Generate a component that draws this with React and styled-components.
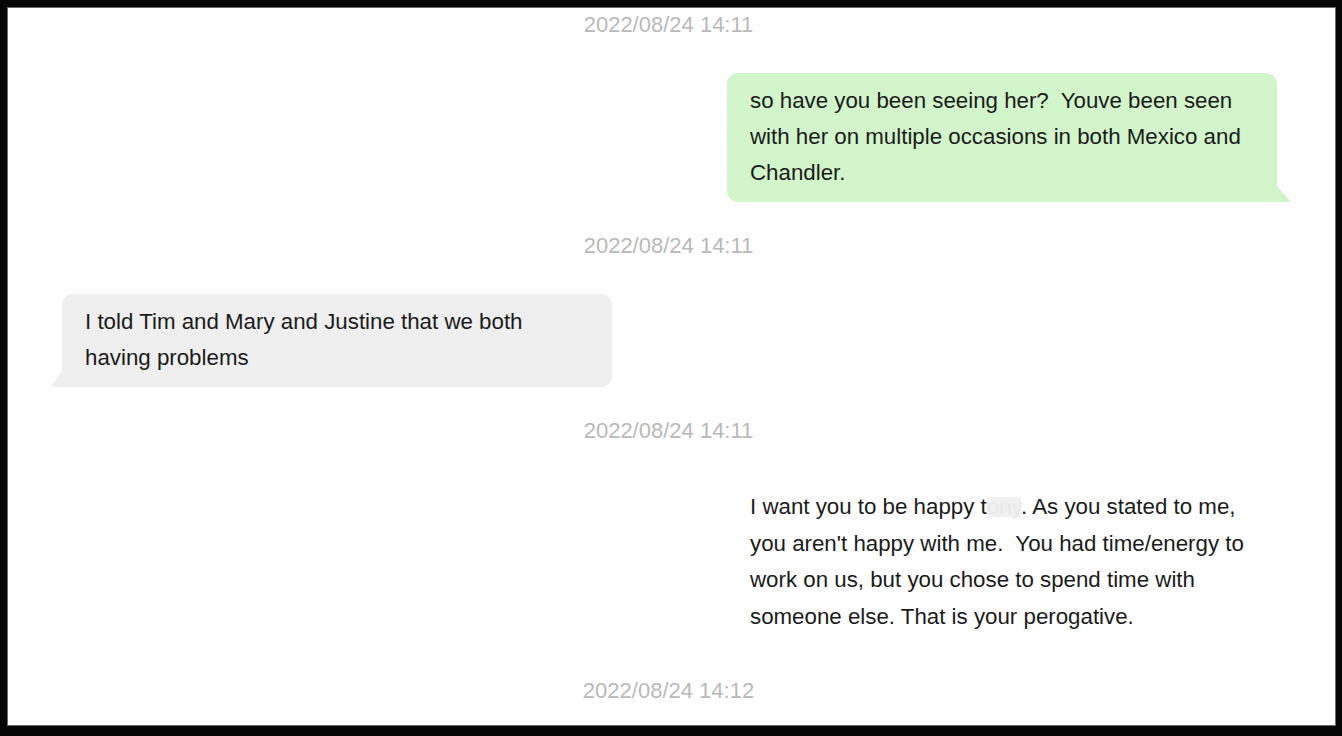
import React from "react";
import styled, {createGlobalStyle, css} from "styled-components";

const GlobalStyle = createGlobalStyle`
    html, body {
        margin: 0;
        padding: 0;
        background: #000;
    }
    body {
        font-family: "Liberation Sans", Arial, Helvetica, sans-serif;
    }
`

const Frame = styled.div`
    box-sizing: border-box;
    width: 1342px;
    height: 736px;
    border-style: solid;
    border-color: #050505;
    border-width: 7px 6px 10px 7px;
    background: #fff;
    box-shadow: inset 0 0 0 1px #6a6a6a;
    overflow: hidden;
`

const Thread = styled.div`
    display: flex;
    flex-direction: column;
    padding: 5px 59px 0 55px;
`

const Stamp = styled.div`
    align-self: center;
    font-size: 22px;
    line-height: 26px;
    color: #b9b9b9;
    margin: 0 0 35px -2px;
`

const Bubble = styled.div`
    position: relative;
    box-sizing: border-box;
    max-width: 550px;
    padding: 10px 23px 11px;
    margin-bottom: 31px;
    font-size: 22.3px;
    line-height: ${({lead}) => lead || 36}px;
    color: #1b1b1b;
    white-space: pre-wrap;
    border-radius: 11px;
    ${({side}) => side === 'right' ? css`
        align-self: flex-end;
        border-bottom-right-radius: 0;
    ` : css`
        align-self: flex-start;
        border-bottom-left-radius: 0;
    `}
    background: ${({tone}) => tone === 'green' ? '#d3f5cb' : tone === 'gray' ? '#efefef' : '#fff'};

    &::after {
        content: '';
        position: absolute;
        bottom: 0;
        width: 14px;
        height: 16px;
        background: inherit;
        ${({side}) => side === 'right' ? css`
            right: -14px;
            clip-path: polygon(0 0, 100% 100%, 0 100%);
        ` : css`
            left: -12px;
            width: 12px;
            clip-path: polygon(100% 0, 100% 100%, 0 100%);
        `}
    }
`

// blurred-out name: a light box drawn behind faded letters
const Redacted = styled.span`
    color: #e9e9e9;
    background: linear-gradient(#f1f1f1, #f1f1f1) no-repeat center / 100% 20px;
`

const messages = [
    {
        time: '2022/08/24 14:11',
        side: 'right',
        tone: 'green',
        text: 'so have you been seeing her?  Youve been seen with her on multiple occasions in both Mexico and Chandler.'
    },
    {
        time: '2022/08/24 14:11',
        side: 'left',
        tone: 'gray',
        text: 'I told Tim and Mary and Justine that we both having problems'
    },
    {
        time: '2022/08/24 14:11',
        side: 'right',
        tone: 'white',
        lead: 36.7,
        text: (
            <>
                I want you to be happy t<Redacted>ony</Redacted>. As you stated to me, you aren't happy with me.  You had time/energy to work on us, but you chose to spend time with someone else. That is your perogative.
            </>
        )
    }
]

export default function App() {
    return (
        <>
            <GlobalStyle/>
            <Frame>
                <Thread>
                    {messages.map((m, i) => (
                        <React.Fragment key={i}>
                            <Stamp>{m.time}</Stamp>
                            <Bubble side={m.side} tone={m.tone} lead={m.lead}>{m.text}</Bubble>
                        </React.Fragment>
                    ))}
                    <Stamp>2022/08/24 14:12</Stamp>
                </Thread>
            </Frame>
        </>
    )
}
